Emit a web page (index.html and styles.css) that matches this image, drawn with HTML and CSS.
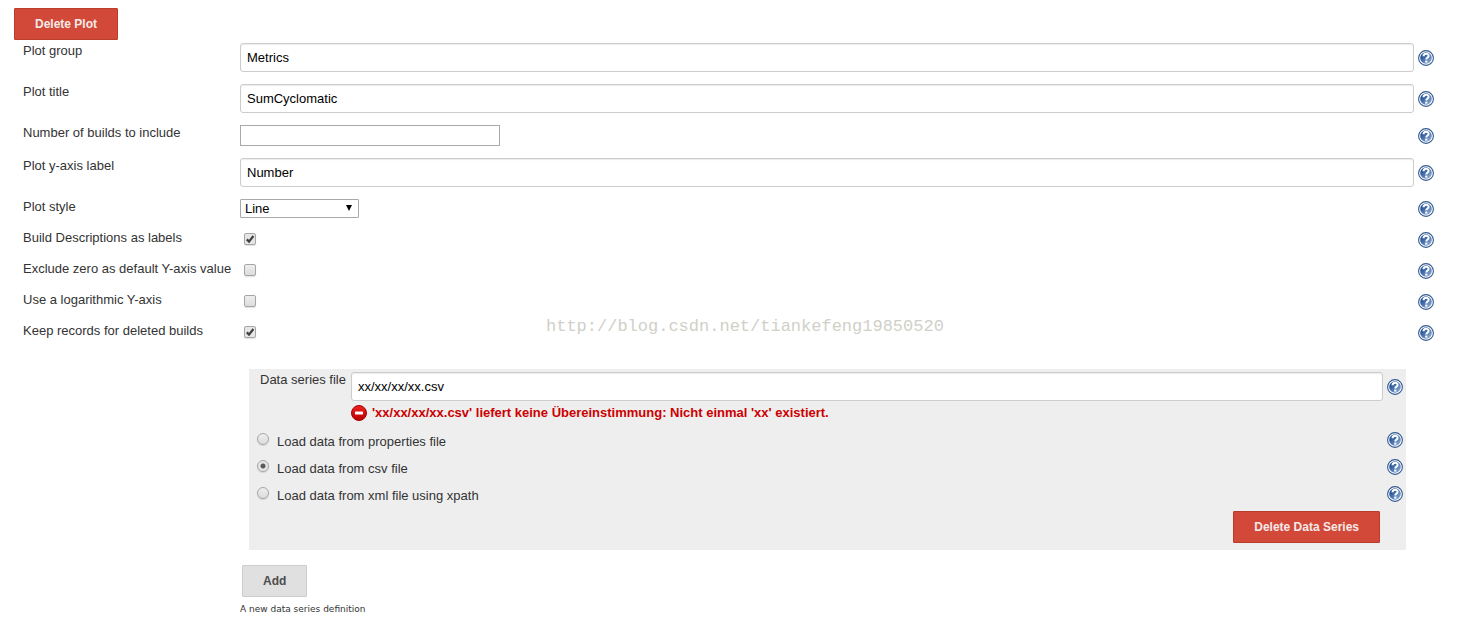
FILE: index.html
```
<!DOCTYPE html>
<html lang="en">
<head>
  <meta charset="utf-8">
  <title>Plot build data</title>
  <link rel="stylesheet" href="styles.css">
</head>
<body>
<!-- shared icons -->
<svg class="icon-defs" aria-hidden="true">
  <defs>
    <linearGradient id="helpFill" x1="0" y1="0" x2="1" y2="1">
      <stop offset="0.2" stop-color="#1f4f94"/>
      <stop offset="1" stop-color="#9db7dc"/>
    </linearGradient>
    <linearGradient id="errorFill" x1="0" y1="0" x2="0" y2="1">
      <stop offset="0" stop-color="#ee2222"/>
      <stop offset="1" stop-color="#b80000"/>
    </linearGradient>
  </defs>
  <symbol id="help" viewBox="0 0 16 16">
    <circle cx="8" cy="8" r="7.4" fill="#fff" stroke="#31598f" stroke-width="1.1"/>
    <circle cx="8" cy="8" r="5.8" fill="url(#helpFill)"/>
    <path d="M5.5 6.2C5.5 3 10.6 3 10.6 5.9C10.6 7.6 8.3 7.5 8.3 9.6" fill="none" stroke="#fff" stroke-width="2"/>
    <rect x="7.2" y="10.6" width="2.2" height="2" fill="#fff"/>
  </symbol>
  <symbol id="error" viewBox="0 0 16 16">
    <circle cx="8" cy="8" r="7.5" fill="url(#errorFill)" stroke="#a80000"/>
    <rect x="4" y="6.5" width="8" height="3" rx="0.5" fill="#fff"/>
  </symbol>
</svg>

<form class="plot-form">
  <button type="button" class="btn btn-danger">Delete Plot</button>

  <div class="rows">
    <div class="row">
      <label for="group">Plot group</label>
      <input type="text" class="text-input" id="group" name="group" value="Metrics">
      <a href="#" class="help" aria-label="Help"><svg><use href="#help"/></svg></a>
    </div>
    <div class="row">
      <label for="title">Plot title</label>
      <input type="text" class="text-input" id="title" name="title" value="SumCyclomatic">
      <a href="#" class="help" aria-label="Help"><svg><use href="#help"/></svg></a>
    </div>
    <div class="row">
      <label for="numBuilds">Number of builds to include</label>
      <input type="text" class="number-input" id="numBuilds" name="numBuilds">
      <a href="#" class="help" aria-label="Help"><svg><use href="#help"/></svg></a>
    </div>
    <div class="row">
      <label for="yaxis">Plot y-axis label</label>
      <input type="text" class="text-input" id="yaxis" name="yaxis" value="Number">
      <a href="#" class="help" aria-label="Help"><svg><use href="#help"/></svg></a>
    </div>
    <div class="row">
      <label for="style">Plot style</label>
      <div class="select-box">
        <select id="style" name="style">
          <option selected>Line</option>
        </select>
      </div>
      <a href="#" class="help" aria-label="Help"><svg><use href="#help"/></svg></a>
    </div>
    <div class="row">
      <label for="useDescr">Build Descriptions as labels</label>
      <input type="checkbox" id="useDescr" name="useDescr" checked>
      <a href="#" class="help" aria-label="Help"><svg><use href="#help"/></svg></a>
    </div>
    <div class="row">
      <label for="exclZero">Exclude zero as default Y-axis value</label>
      <input type="checkbox" id="exclZero" name="exclZero">
      <a href="#" class="help" aria-label="Help"><svg><use href="#help"/></svg></a>
    </div>
    <div class="row">
      <label for="logarithmic">Use a logarithmic Y-axis</label>
      <input type="checkbox" id="logarithmic" name="logarithmic">
      <a href="#" class="help" aria-label="Help"><svg><use href="#help"/></svg></a>
    </div>
    <div class="row">
      <label for="keepRecords">Keep records for deleted builds</label>
      <input type="checkbox" id="keepRecords" name="keepRecords" checked>
      <a href="#" class="help" aria-label="Help"><svg><use href="#help"/></svg></a>
    </div>
  </div>

  <div class="series">
    <div class="series-file">
      <label for="file">Data series file</label>
      <input type="text" class="text-input" id="file" name="file" value="xx/xx/xx/xx.csv">
      <a href="#" class="help" aria-label="Help"><svg><use href="#help"/></svg></a>
      <div class="error">
        <svg><use href="#error"/></svg>
        <span>'xx/xx/xx/xx.csv' liefert keine Übereinstimmung: Nicht einmal 'xx' existiert.</span>
      </div>
    </div>
    <div class="radio-row">
      <input type="radio" id="properties" name="fileType">
      <label for="properties">Load data from properties file</label>
      <a href="#" class="help" aria-label="Help"><svg><use href="#help"/></svg></a>
    </div>
    <div class="radio-row">
      <input type="radio" id="csv" name="fileType" checked>
      <label for="csv">Load data from csv file</label>
      <a href="#" class="help" aria-label="Help"><svg><use href="#help"/></svg></a>
    </div>
    <div class="radio-row">
      <input type="radio" id="xml" name="fileType">
      <label for="xml">Load data from xml file using xpath</label>
      <a href="#" class="help" aria-label="Help"><svg><use href="#help"/></svg></a>
    </div>
    <div class="series-actions">
      <button type="button" class="btn btn-danger">Delete Data Series</button>
    </div>
  </div>

  <div class="add">
    <button type="button" class="btn">Add</button>
    <p>A new data series definition</p>
  </div>

  <div class="watermark">http://blog.csdn.net/tiankefeng19850520</div>
</form>
</body>
</html>
```
FILE: styles.css
```
body {
  margin: 0;
  background: #fff;
  color: #333;
  font: 13px/15px "Liberation Sans", Arial, sans-serif;
}

input, select, button {
  margin: 0;
  box-sizing: border-box;
  font: inherit;
}

.icon-defs {
  position: absolute;
  width: 0;
  height: 0;
}

.plot-form {
  position: relative;
  padding: 8px 30px 8px 14px;
}

/* buttons */
.btn {
  display: block;
  height: 32px;
  padding: 0 20px;
  border: 1px solid #ccc;
  border-radius: 1px;
  background: #e0e0e0;
  color: #4d4d4d;
  font-size: 12px;
  font-weight: bold;
}

.btn-danger {
  border-color: #b93c2c;
  background: #d24939;
  color: #f5e9e8;
}

/* form rows */
.rows {
  margin: 3px 0 15px 9px;
}

.row {
  display: grid;
  grid-template-columns: 213px 1fr 16px;
  column-gap: 4px;
  align-items: center;
  min-height: 19px;
  padding-bottom: 12px;
}

.row label {
  align-self: start;
  white-space: nowrap;
}

.text-input {
  width: 100%;
  height: 29px;
  padding: 0 6px;
  border: 1px solid #ccc;
  border-radius: 3px;
  background: #fff;
  box-shadow: inset 0 1px 1px rgba(0, 0, 0, 0.08);
  color: #000;
}

.number-input {
  width: 260px;
  height: 21px;
  border: 1px solid #a9a9a9;
  background: #fff;
}

.select-box {
  position: relative;
  width: 119px;
}

.select-box select {
  display: block;
  width: 100%;
  height: 19px;
  padding: 0 4px;
  border: 1px solid #a9a9a9;
  border-radius: 1px;
  appearance: none;
  background: #fff;
  color: #000;
}

.select-box::after {
  content: "";
  position: absolute;
  top: 6px;
  right: 7px;
  border: 3px solid transparent;
  border-top: 6px solid #000;
  border-bottom: 0;
  pointer-events: none;
}

.help, .help svg, .error svg {
  display: block;
  width: 16px;
  height: 16px;
}

input[type="checkbox"], input[type="radio"] {
  appearance: none;
  width: 12px;
  height: 12px;
  border: 1px solid #a6a6a6;
  background: linear-gradient(#eee, #dcdcdc);
  box-shadow: 0 1px 1px rgba(0, 0, 0, 0.12);
}

input[type="checkbox"] {
  margin: 0 0 2px 4px;
  border-radius: 2px;
}

input[type="checkbox"]:checked {
  background: url('data:image/svg+xml,<svg xmlns="http://www.w3.org/2000/svg" viewBox="0 0 10 10"><path d="M1.8 5.4L4 7.6L8.4 2" fill="none" stroke="%23404040" stroke-width="2.2"/></svg>') #e6e6e6;
}

input[type="radio"] {
  margin-top: 1px;
  border-radius: 50%;
}

input[type="radio"]:checked {
  background: radial-gradient(circle, #5a5a5a 2px, #e6e6e6 3px);
}

/* data series block */
.series {
  margin: 0 28px 0 235px;
  padding: 3px 3px 7px 8px;
  background: #eee;
}

.series-file {
  display: grid;
  grid-template-columns: 87px 1fr 16px;
  gap: 4px;
  align-items: center;
  padding-left: 3px;
}

.series-file label {
  align-self: start;
  white-space: nowrap;
}

.error {
  grid-column: 2 / 4;
  display: flex;
  gap: 5px;
  color: #c00;
  font-weight: bold;
}

.radio-row {
  display: grid;
  grid-template-columns: 12px 1fr 16px;
  column-gap: 8px;
  height: 16px;
  margin-top: 11px;
}

.radio-row label {
  padding-top: 2px;
}

.series-actions {
  display: flex;
  justify-content: flex-end;
  margin-top: 9px;
  padding-right: 23px;
}

.add {
  margin: 15px 0 0 226px;
}

.add .btn {
  margin-left: 2px;
}

.add p {
  margin: 5px 0 0;
  font-family: "DejaVu Sans", Verdana, sans-serif;
  font-size: 9px;
}

.watermark {
  position: absolute;
  top: 319px;
  left: 546px;
  color: #d0d0c8;
  font-family: "Liberation Mono", "Courier New", monospace;
  font-size: 17px;
  pointer-events: none;
}
```
